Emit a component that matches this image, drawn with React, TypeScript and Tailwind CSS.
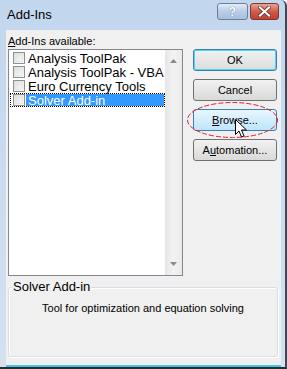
import React from 'react';

const font = { fontFamily: '"Liberation Sans", Arial, sans-serif' };

const items = ['Analysis ToolPak', 'Analysis ToolPak - VBA', 'Euro Currency Tools', 'Solver Add-in'];

const Checkbox = () => (
    <span className="box-border h-[12px] w-[12px] shrink-0 border border-[#8e8f8f] bg-gradient-to-br from-[#dcdcdc] to-[#fbfbfb] p-[1px]">
        <span className="block h-full w-full border border-[#e6e6e6] bg-gradient-to-br from-[#e2e2e2] to-[#f7f7f7]" />
    </span>
);

const DialogButton = ({ children, variant }: { children: React.ReactNode; variant?: 'default' | 'hover' }) => {
    const look =
        variant === 'default'
            ? 'border-[#3c7fb1] bg-gradient-to-b from-[#f2f2f2] to-[#dcdcdc] shadow-[inset_0_0_0_1px_#48d8fb]'
            : variant === 'hover'
              ? 'border-[#3c7fb1] bg-gradient-to-b from-[#eaf6fd] to-[#bde5fc]'
              : 'border-[#707070] bg-gradient-to-b from-[#f2f2f2] to-[#d9d9d9]';
    return (
        <button className={`flex h-[22px] w-[84px] items-center justify-center rounded-[3px] border text-[11px] text-black ${look}`}>
            {children}
        </button>
    );
};

export default function App() {
    return (
        <div className="relative h-[369px] w-[287px] overflow-hidden bg-white" style={font}>
            <div className="flex h-full w-full flex-col rounded-tr-[6px] border-r-2 border-b-2 border-r-[#3a4a5a] border-b-[#2c2c2c] bg-gradient-to-b from-[#c2d6ee] to-[#d3e1f1]">
                {/* title bar */}
                <div className="flex h-[30px] shrink-0 items-start pl-[7px] pt-[7px] pr-[6px]">
                    <span className="text-[13px] leading-[16px] text-black">Add-Ins</span>
                    <div className="ml-auto -mt-[4px] flex gap-[2px]">
                        <div className="flex h-[17px] w-[31px] items-center justify-center rounded-[3px] border border-[#6d7f98] bg-gradient-to-b from-[#e3ecf7] via-[#b9cde6] to-[#a7c0df] text-[12px] font-bold leading-none text-white [text-shadow:0_0_1px_#3b4f6e]">
                            ?
                        </div>
                        <div className="flex h-[17px] w-[29px] items-center justify-center rounded-[3px] border border-[#7a3a33] bg-gradient-to-b from-[#e8a493] via-[#cf5b48] to-[#c2402f]">
                            <svg width="13" height="11" viewBox="0 0 13 11">
                                <path d="M2 1.5 L11 9.5 M11 1.5 L2 9.5" stroke="#5a2a25" strokeWidth="3.6" strokeLinecap="square" />
                                <path d="M2 1.5 L11 9.5 M11 1.5 L2 9.5" stroke="#ffffff" strokeWidth="2.2" strokeLinecap="square" />
                            </svg>
                        </div>
                    </div>
                </div>

                {/* client area */}
                <div className="ml-[6px] mr-[4px] flex flex-1 flex-col bg-[#f0f0f0] px-[2px] text-[11px] text-black">
                    <div className="mt-[5px] h-[13px] leading-[13px]">
                        <span className="underline">A</span>dd-Ins available:
                    </div>
                    <div className="mt-[1px] flex gap-[10px]">
                        <div className="flex h-[227px] w-[175px] border border-[#828790] bg-white">
                            <div className="flex-1 pt-[1px] text-[13px]">
                                {items.map((item, i) => {
                                    const selected = i === items.length - 1;
                                    return (
                                        <div
                                            key={item}
                                            className={`ml-[1px] flex h-[14px] items-center pl-[2px] ${selected ? 'border border-dotted border-black' : 'border border-transparent'}`}
                                        >
                                            <Checkbox />
                                            <span
                                                className={`ml-[1px] flex h-full flex-1 items-center pl-[2px] leading-none ${selected ? 'bg-[#3399ff] text-white' : ''}`}
                                            >
                                                {item}
                                            </span>
                                        </div>
                                    );
                                })}
                            </div>
                            <div className="flex w-[17px] flex-col items-center justify-between bg-gradient-to-r from-[#e6e6e6] via-[#f3f3f3] to-[#e9e9e9] py-[9px]">
                                <svg width="7" height="4" viewBox="0 0 7 4">
                                    <path d="M0 4 L3.5 0 L7 4 Z" fill="#8a8a8a" />
                                </svg>
                                <svg width="7" height="4" viewBox="0 0 7 4">
                                    <path d="M0 0 L3.5 4 L7 0 Z" fill="#8a8a8a" />
                                </svg>
                            </div>
                        </div>
                        <div className="flex flex-col gap-[8px]">
                            <DialogButton variant="default">OK</DialogButton>
                            <DialogButton>Cancel</DialogButton>
                            <DialogButton variant="hover">
                                <span className="underline">B</span>rowse...
                            </DialogButton>
                            <DialogButton>
                                A<span className="underline">u</span>tomation...
                            </DialogButton>
                        </div>
                    </div>

                    {/* group box */}
                    <div className="relative mt-[11px] h-[70px] w-[270px] rounded-[3px] border border-[#d5dfe5] shadow-[inset_1px_1px_0_#ffffff,1px_1px_0_#ffffff]">
                        <span className="absolute -top-[8px] left-[3px] bg-[#f0f0f0] px-[1px] text-[13px] leading-[14px]">Solver Add-in</span>
                        <div className="mt-[14px] text-center leading-[13px]">Tool for optimization and equation solving</div>
                    </div>
                </div>
                <div className="ml-[6px] mr-[4px] h-[2px] bg-[#3fc6ef]" />
            </div>

            {/* annotation ellipse */}
            <svg className="absolute left-[186px] top-[101px]" width="93" height="38" viewBox="0 0 93 38">
                <ellipse cx="46.5" cy="19" rx="45" ry="17.5" fill="none" stroke="#e0202a" strokeWidth="1" strokeDasharray="5 2" />
            </svg>

            {/* mouse cursor */}
            <svg className="absolute left-[235px] top-[119px]" width="13" height="20" viewBox="0 0 13 20">
                <path d="M0.5 0.5 L0.5 15.5 L4 12 L6.5 18 L9 17 L6.5 11 L11.5 11 Z" fill="#ffffff" stroke="#000000" strokeWidth="1" strokeLinejoin="miter" />
            </svg>
        </div>
    );
}
